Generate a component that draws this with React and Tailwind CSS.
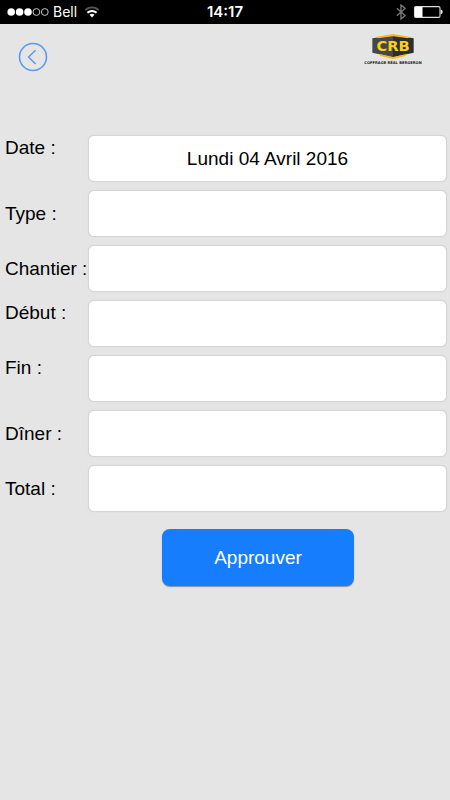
import { useState } from "react";

const FIELDS = [
  { id: "date", label: "Date :", top: true },
  { id: "type", label: "Type :" },
  { id: "chantier", label: "Chantier :" },
  { id: "debut", label: "Début :", top: true },
  { id: "fin", label: "Fin :", top: true },
  { id: "diner", label: "Dîner :" },
  { id: "total", label: "Total :" },
];

function StatusBar() {
  return (
    <div className="grid h-6 grid-cols-[1fr_auto_1fr] items-center bg-black px-[7px] font-['Inter','Liberation_Sans',sans-serif] text-sm text-white">
      <div className="flex items-center">
        {/* Signal dots */}
        <svg className="mr-1 h-2 w-[42px]" viewBox="0 0 42 8" fill="none">
          <circle cx="4.2" cy="4" r="3.8" fill="#fff" />
          <circle cx="12.6" cy="4" r="3.8" fill="#fff" />
          <circle cx="21" cy="4" r="3.8" fill="#fff" />
          <circle cx="29.4" cy="4" r="3.4" stroke="#ddd" strokeWidth="0.9" />
          <circle cx="37.8" cy="4" r="3.4" stroke="#ddd" strokeWidth="0.9" />
        </svg>
        <span>Bell</span>
        {/* Wifi */}
        <svg className="ml-[7px] h-3 w-4" viewBox="0 0 16 12" fill="none">
          <path d="M1.2 4.2C5 .3 11 .3 14.8 4.2" stroke="#555" strokeWidth="1.8" />
          <path d="M3.4 6.8C6 4.3 10 4.3 12.6 6.8" stroke="#fff" strokeWidth="2" />
          <path d="M5.5 8.8C6.9 7.5 9.1 7.5 10.5 8.8L8 11.6Z" fill="#fff" />
        </svg>
      </div>

      <span className="text-[15px] font-semibold">14:17</span>

      <div className="flex items-center justify-end gap-[7px]">
        {/* Bluetooth */}
        <svg className="h-4 w-[10px]" viewBox="0 0 10 16" fill="none" stroke="#777" strokeWidth="1.4">
          <path d="M.8 4.3 9 11.6 5 15V1l4 3.4-8.2 7.3" />
        </svg>
        {/* Battery */}
        <svg className="h-3 w-[30px]" viewBox="0 0 30 12" fill="none">
          <rect x="1.5" y="0.6" width="25.5" height="10.8" rx="1.4" stroke="#ddd" strokeWidth="1.1" />
          <rect x="2" y="1" width="7.5" height="10" fill="#fff" />
          <path d="M27.6 3.6c2.8.4 2.8 4.4 0 4.8z" fill="#ddd" />
        </svg>
      </div>
    </div>
  );
}

function Logo() {
  return (
    <svg className="h-8 w-[60px]" viewBox="0 0 180 96">
      <path d="M28 19 90 10v66L28 62z" fill="#45474c" />
      <path d="M152 19 90 10v66l62-14z" fill="#2b2d31" />
      <path d="M42 14 90 6l48 8-2 5-46-6-46 6z" fill="#fdb913" />
      <path d="M46 65 90 75l44-10-6 7-38 9-38-9z" fill="#fdb913" />
      <text
        x="90"
        y="57"
        textAnchor="middle"
        className="fill-[#fdd016] font-['DejaVu_Sans',sans-serif] text-[44px] font-bold"
      >
        CRB
      </text>
      <text
        x="90"
        y="95"
        textAnchor="middle"
        className="fill-[#222] font-['DejaVu_Sans',sans-serif] text-[11px] font-bold"
      >
        COFFRAGE RÉAL BERGERON
      </text>
    </svg>
  );
}

export default function App() {
  const [values, setValues] = useState({ date: "Lundi 04 Avril 2016" });

  const handleChange = (e) => {
    setValues({ ...values, [e.target.name]: e.target.value });
  };

  return (
    <div className="min-h-screen bg-[#e5e5e5] font-['Liberation_Sans',Arial,sans-serif] text-[19px] leading-[26px] text-black">
      <StatusBar />

      <header className="flex items-start justify-between pt-2 pr-[27px] pb-[63px] pl-[18px]">
        <button type="button" aria-label="Retour" className="mt-[10px]">
          <svg className="h-[30px] w-[30px]" viewBox="0 0 30 30" fill="none" stroke="#579bf5">
            <circle cx="15" cy="15" r="13.5" strokeWidth="1.6" />
            <path d="M17.6 8.2 10.6 15l7 7" strokeWidth="1.5" />
          </svg>
        </button>
        <Logo />
      </header>

      <form onSubmit={(e) => e.preventDefault()}>
        <div className="flex flex-col gap-2 pr-[3px] pl-[5px]">
          {FIELDS.map((field) => (
            <div key={field.id} className="flex items-center">
              <label
                htmlFor={field.id}
                className={`w-[83px] shrink-0 whitespace-nowrap ${field.top ? "self-start" : ""}`}
              >
                {field.label}
              </label>
              <input
                id={field.id}
                name={field.id}
                type="text"
                value={values[field.id] || ""}
                onChange={handleChange}
                className="h-[47px] min-w-0 flex-1 rounded-md border border-[#d6d6d6] bg-white text-center shadow-[0_0_1px_#c8c8c8]"
              />
            </div>
          ))}
        </div>

        <button
          type="submit"
          className="mt-[17px] ml-[36%] h-[57px] w-48 rounded-lg bg-[#167efc] text-white shadow-[0_1px_1px_#8a9099]"
        >
          Approuver
        </button>
      </form>
    </div>
  );
}
